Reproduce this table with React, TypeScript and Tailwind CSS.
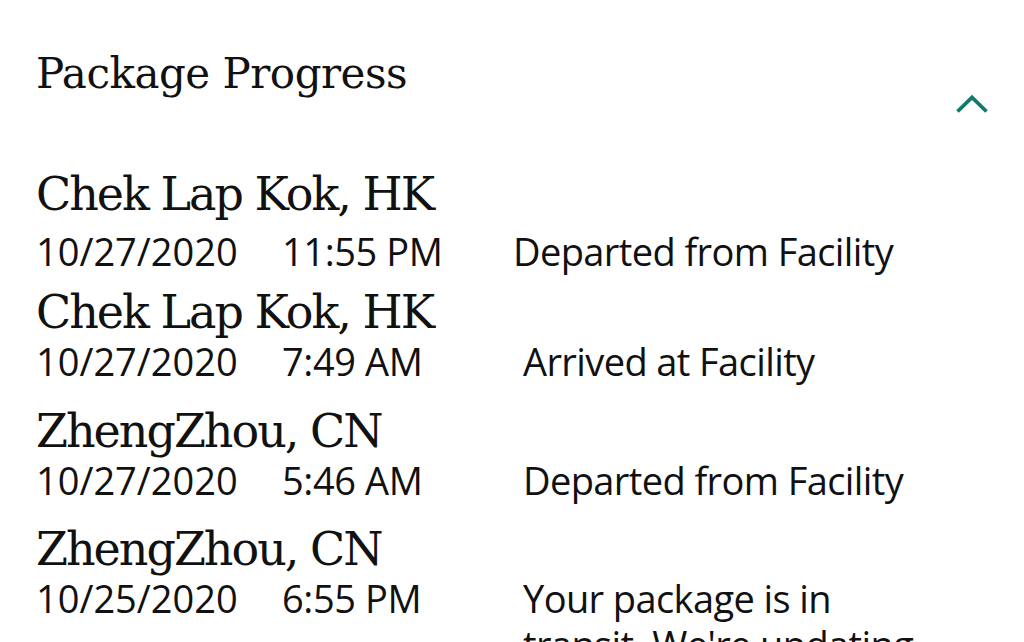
const events = [
  {
    place: "Chek Lap Kok, HK",
    date: "10/27/2020",
    time: "11:55 PM",
    status: "Departed from Facility",
    rowGap: "mt-[70px]",
    lineGap: "mt-[8px]",
    statusPad: "pl-0",
  },
  {
    place: "Chek Lap Kok, HK",
    date: "10/27/2020",
    time: "7:49 AM",
    status: "Arrived at Facility",
    rowGap: "mt-[12px]",
    lineGap: "mt-0",
    statusPad: "pl-[10px]",
  },
  {
    place: "ZhengZhou, CN",
    date: "10/27/2020",
    time: "5:46 AM",
    status: "Departed from Facility",
    rowGap: "mt-[21px]",
    lineGap: "mt-0",
    statusPad: "pl-[10px]",
  },
  {
    place: "ZhengZhou, CN",
    date: "10/25/2020",
    time: "6:55 PM",
    status: "Your package is in transit. We're updating the tracking details as soon as we can.",
    rowGap: "mt-[20px]",
    lineGap: "mt-0",
    statusPad: "pl-[10px]",
  },
];

function ChevronUp() {
  return (
    <svg width="34" height="20" viewBox="0 0 34 20" fill="none" className="mt-[44px] mr-[-1px] shrink-0">
      <path
        d="M2.5 17.5 L17 3.5 L31.5 17.5"
        stroke="#0f7b6f"
        strokeWidth="3.8"
        strokeLinecap="butt"
        strokeLinejoin="miter"
      />
    </svg>
  );
}

export default function App() {
  return (
    <div className="h-[642px] w-full overflow-hidden bg-white px-[36px] pt-[50px] text-[#111111]">
      <div className="flex h-[48px] items-start justify-between">
        <h1 className="font-['DejaVu_Serif',serif] text-[42px] leading-[48px] tracking-[-0.5px]">
          Package Progress
        </h1>
        <ChevronUp />
      </div>

      {events.map((e, i) => (
        <div key={i} className={e.rowGap}>
          <h2 className="font-['DejaVu_Serif',serif] text-[46px] leading-[52px] tracking-[-2px]">
            {e.place}
          </h2>
          <div
            className={`grid grid-cols-[246px_231px_410px] font-['Open_Sans',sans-serif] text-[38px] leading-[46px] ${e.lineGap}`}
          >
            <span>{e.date}</span>
            <span className="tracking-[-0.4px]">{e.time}</span>
            <span className={`tracking-[-0.6px] ${e.statusPad}`}>{e.status}</span>
          </div>
        </div>
      ))}
    </div>
  );
}
